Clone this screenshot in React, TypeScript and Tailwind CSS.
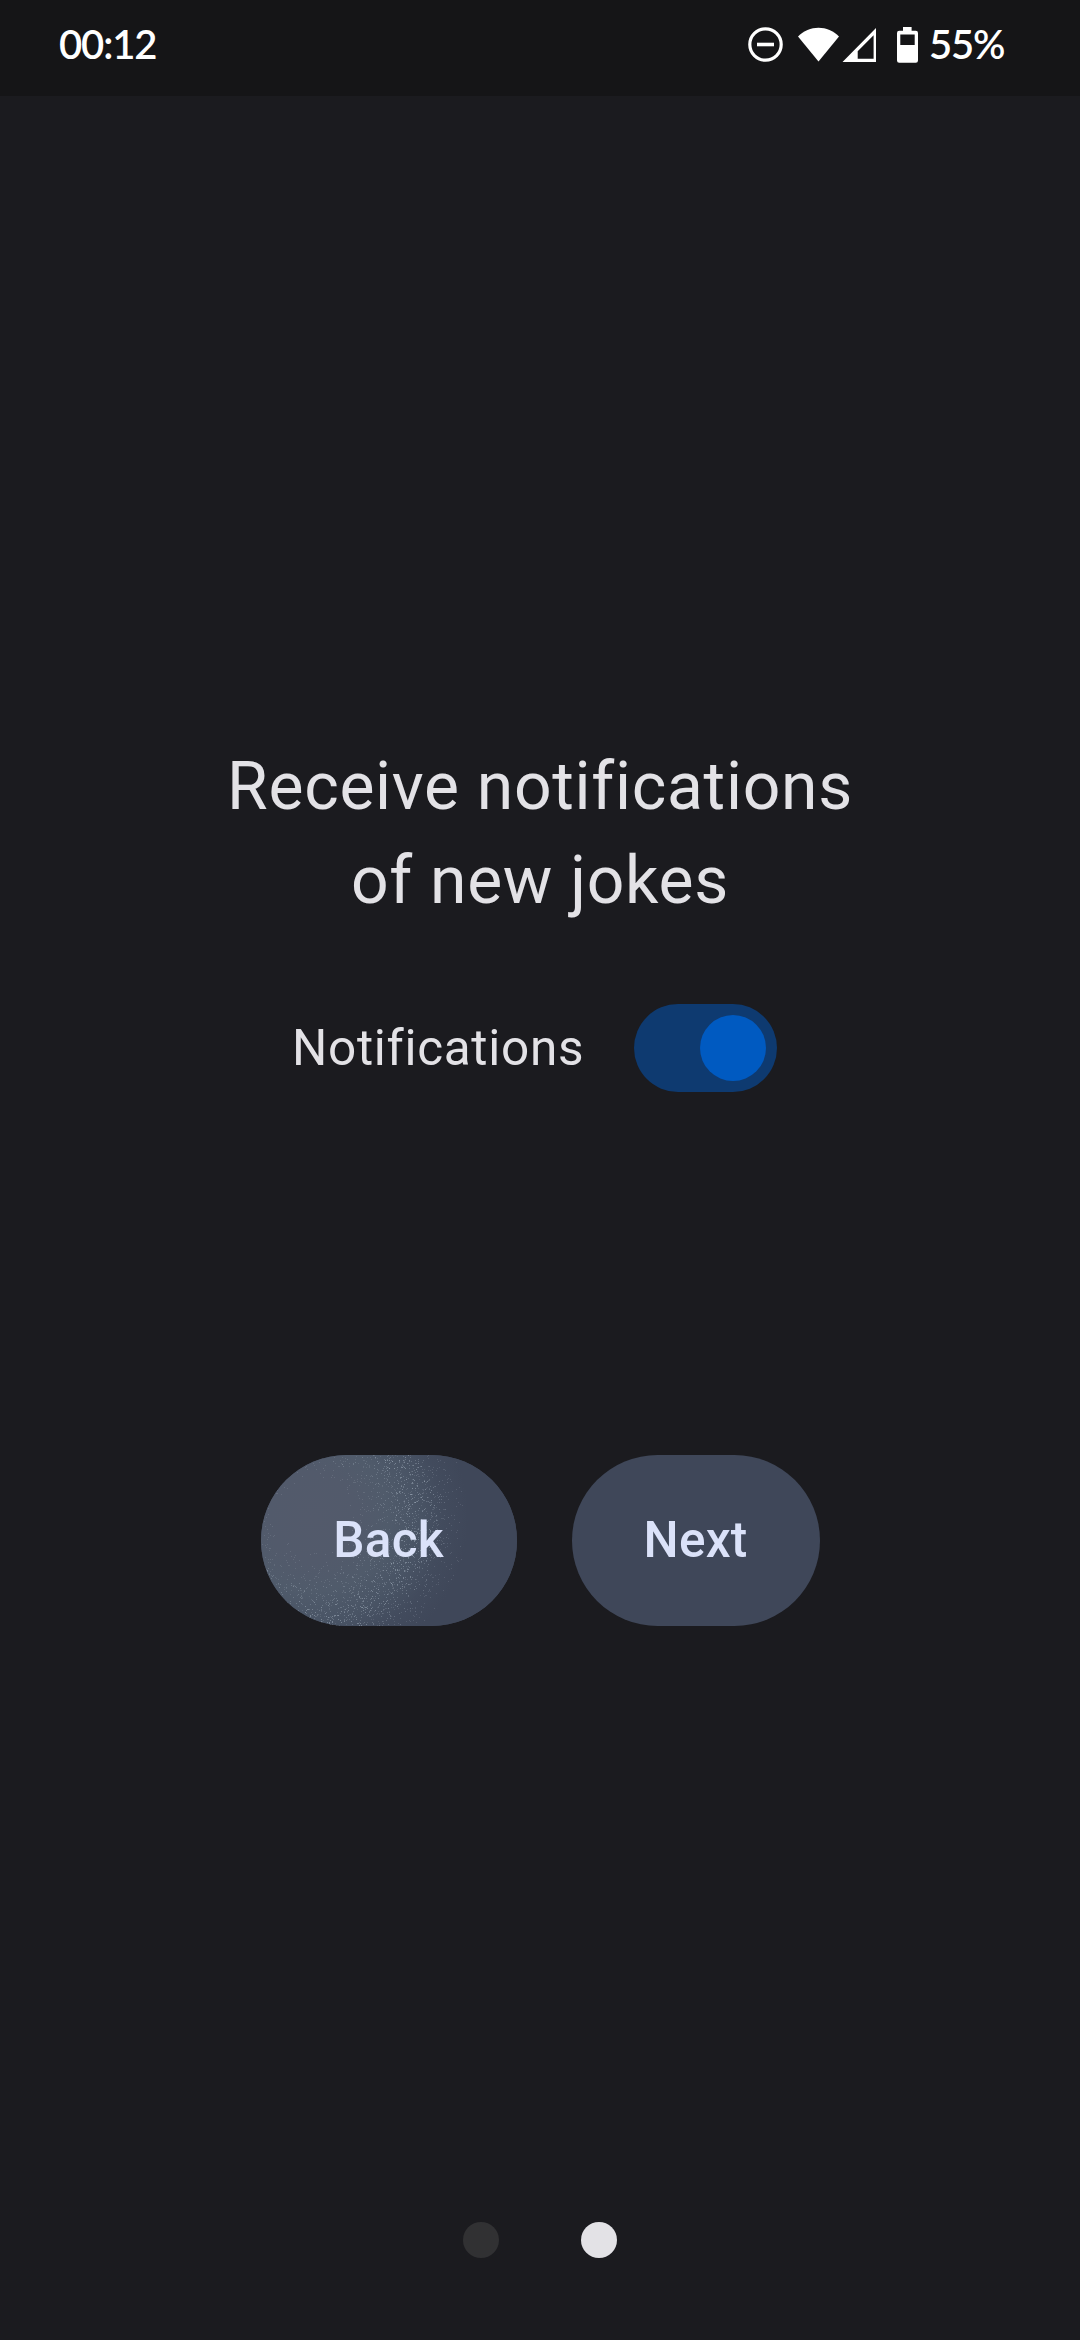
import React from "react";

const BACK_W = 256;
const BACK_H = 171;

function sparkles() {
  let seed = 1337;
  const rand = () => {
    seed = (seed * 1664525 + 1013904223) >>> 0;
    return seed / 4294967296;
  };
  const levels = ["", "", ""];
  const cx = 52;
  const cy = 62;
  for (let i = 0; i < 14000; i++) {
    const x = Math.floor(rand() * BACK_W);
    const y = Math.floor(rand() * BACK_H);
    const d = Math.hypot(x - cx, y - cy);
    const fade = d < 105 ? (d - 35) / 70 : 1 - (d - 105) / 50;
    if (fade <= 0 || rand() > fade * 0.45) continue;
    const level = Math.min(2, Math.floor(rand() * fade * 3.3));
    levels[level] += `M${x} ${y}h1v1h-1z`;
  }
  return levels;
}

const LEVELS = sparkles();

function StatusBar() {
  return (
    <header className="flex h-24 shrink-0 items-start bg-[#151517] pl-[59px] pr-[74px] text-white">
      <span className="mt-[21px] font-['Lato'] text-[40px] leading-[46px] font-semibold tracking-[-1.1px]">00:12</span>
      <div className="ml-auto flex items-start">
        <svg className="mt-[26px] h-[37px] w-[128px]" viewBox="748 26 128 37" fill="none">
          <circle cx="765.5" cy="44.5" r="15.7" stroke="#fff" strokeWidth="3.2" />
          <path d="M757 44.5h17" stroke="#fff" strokeWidth="3.6" />
          <path d="M798 36.5C809 24.8 828 24.8 839 36.5L818.5 61.5Z" fill="#fff" />
          <path d="M842.5 62L876.7 27.3V62ZM857.7 58.7H873.6V35.3L857.7 51.3Z" fill="#fff" fillRule="evenodd" />
        </svg>
        <svg className="mt-[27px] ml-[21px] h-[36px] w-[21px]" viewBox="897 27 21 36" fill="#fff">
          <path d="M903 27h8.6v3.8h4.2q2.2 0 2.2 2.2v27.5q0 2.2-2.2 2.2h-16.6q-2.2 0-2.2-2.2V33q0-2.2 2.2-2.2H903ZM900.3 34.5V45H914.7V34.5Z" fillRule="evenodd" />
        </svg>
        <span className="mt-[21px] ml-[11px] w-[77px] font-['Lato'] text-[40px] leading-[46px] font-semibold tracking-[-1.2px] whitespace-nowrap">55%</span>
      </div>
    </header>
  );
}

export default function App() {
  return (
    <div className="flex h-[2340px] w-[1080px] flex-col overflow-hidden bg-[#1b1b1f] font-['Roboto',sans-serif] text-[#e3e2e6]">
      <StatusBar />
      <main className="flex flex-1 flex-col items-center">
        <h1 className="mt-[644px] text-center text-[66px] leading-[94px] font-normal tracking-[0.7px]">
          Receive notifications
          <br />
          of new jokes
        </h1>
        <label className="mt-[76px] mr-[9px] flex h-[88px] w-[487px] items-center justify-between">
          <span className="text-[49.5px] leading-[60px] tracking-[0.69px]">Notifications</span>
          <span className="mr-[2px] flex h-[88px] w-[143px] items-center justify-end rounded-full bg-[#0e3a70] pr-[11px]">
            <span className="size-[66px] rounded-full bg-[#005ac1]" />
          </span>
        </label>
        <div className="mt-[363px] flex gap-[55px] text-[49.5px] font-medium tracking-[0.2px] text-[#dbe2f9]">
          <button className="relative h-[171px] w-[256px] overflow-hidden rounded-full bg-[#3f4759]">
            <span className="absolute inset-0 bg-[radial-gradient(circle_at_52px_62px,#535a6b_0px,#525a6b_45px,#505b6b_75px,#495465_105px,#424b5d_130px,#3f4759_155px)]" />
            <svg className="absolute inset-0 size-full" viewBox={`0 0 ${BACK_W} ${BACK_H}`} shapeRendering="crispEdges">
              <path d={LEVELS[0]} fill="#c3d0dc" fillOpacity="0.14" />
              <path d={LEVELS[1]} fill="#c3d0dc" fillOpacity="0.24" />
              <path d={LEVELS[2]} fill="#c3d0dc" fillOpacity="0.38" />
            </svg>
            <span className="relative">Back</span>
          </button>
          <button className="h-[171px] w-[248px] rounded-full bg-[#3f4759]">Next</button>
        </div>
        <nav className="mt-auto mb-[82px] flex gap-[82px]">
          <span className="size-9 rounded-full bg-[#313133]" />
          <span className="size-9 rounded-full bg-[#e3e2e6]" />
        </nav>
      </main>
    </div>
  );
}
